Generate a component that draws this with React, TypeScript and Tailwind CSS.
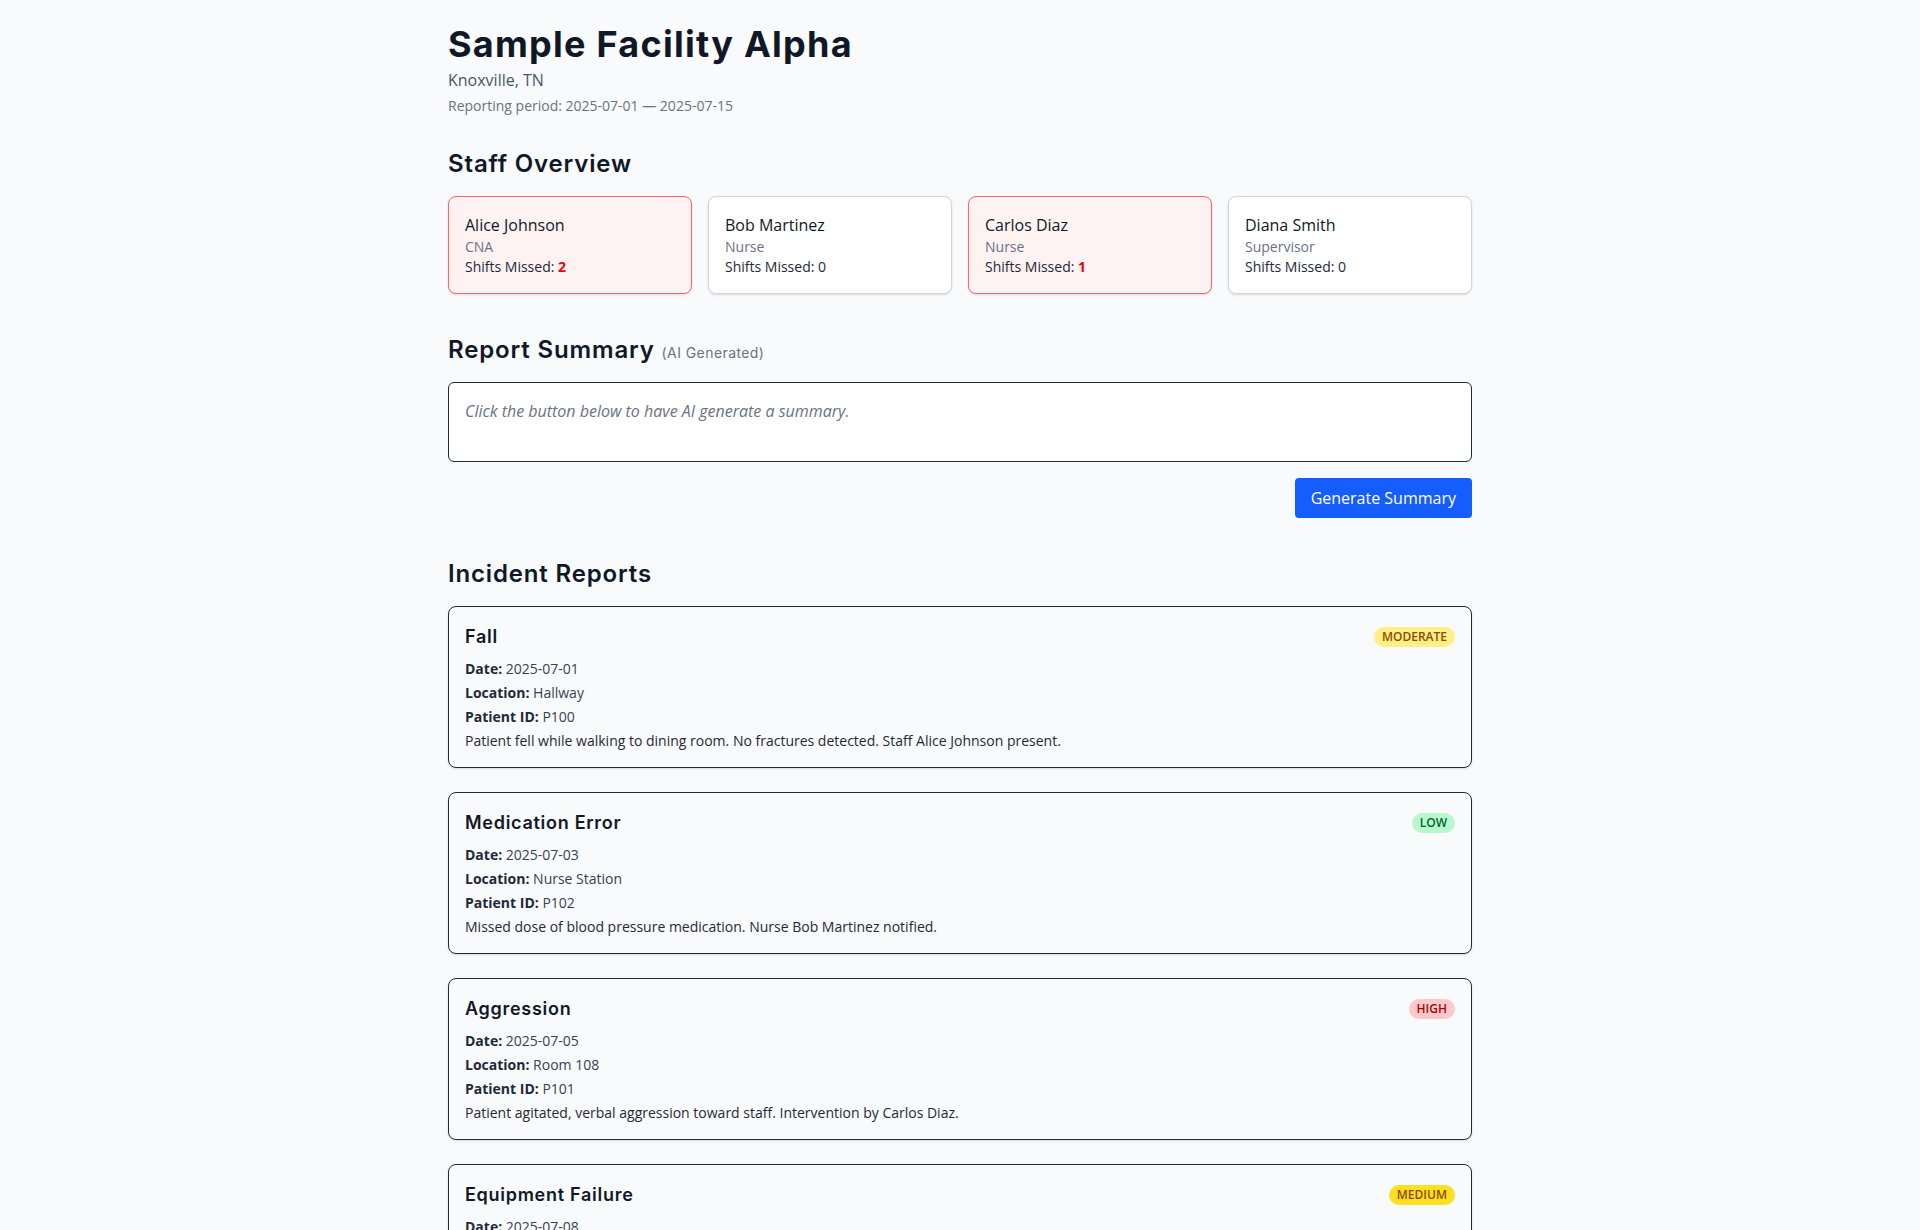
import React from "react";

type Staff = { name: string; role: string; missed: number };
type Incident = {
  type: string;
  severity: "moderate" | "low" | "high" | "medium";
  date: string;
  location: string;
  patientId: string;
  description: string;
};

const staff: Staff[] = [
  { name: "Alice Johnson", role: "CNA", missed: 2 },
  { name: "Bob Martinez", role: "Nurse", missed: 0 },
  { name: "Carlos Diaz", role: "Nurse", missed: 1 },
  { name: "Diana Smith", role: "Supervisor", missed: 0 },
];

const incidents: Incident[] = [
  {
    type: "Fall",
    severity: "moderate",
    date: "2025-07-01",
    location: "Hallway",
    patientId: "P100",
    description:
      "Patient fell while walking to dining room. No fractures detected. Staff Alice Johnson present.",
  },
  {
    type: "Medication Error",
    severity: "low",
    date: "2025-07-03",
    location: "Nurse Station",
    patientId: "P102",
    description: "Missed dose of blood pressure medication. Nurse Bob Martinez notified.",
  },
  {
    type: "Aggression",
    severity: "high",
    date: "2025-07-05",
    location: "Room 108",
    patientId: "P101",
    description:
      "Patient agitated, verbal aggression toward staff. Intervention by Carlos Diaz.",
  },
  {
    type: "Equipment Failure",
    severity: "medium",
    date: "2025-07-08",
    location: "Room 112",
    patientId: "P104",
    description: "Bed alarm failed to activate during night shift. Maintenance notified.",
  },
];

const badgeClass: Record<Incident["severity"], string> = {
  moderate: "bg-yellow-200 text-yellow-800",
  low: "bg-green-200 text-green-800",
  high: "bg-red-200 text-red-800",
  medium: "bg-yellow-300 text-yellow-800",
};

// headings use a wide geometric face; Inter with extra tracking is the nearest installed
const heading = "font-['Inter',sans-serif]";

const StaffCard = ({ person }: { person: Staff }) => {
  const flagged = person.missed > 0;
  return (
    <div
      className={
        flagged
          ? "rounded-lg border border-red-400 bg-red-50 p-4 shadow-sm"
          : "rounded-lg border border-gray-300 bg-white p-4 shadow-sm"
      }
    >
      <h3 className="text-base font-medium text-gray-900">{person.name}</h3>
      <p className="text-sm text-gray-500">{person.role}</p>
      <p className="text-sm text-gray-800">
        Shifts Missed:{" "}
        {flagged ? (
          <span className="font-bold text-red-600">{person.missed}</span>
        ) : (
          <span>{person.missed}</span>
        )}
      </p>
    </div>
  );
};

const IncidentCard = ({ incident }: { incident: Incident }) => {
  return (
    <div className="rounded-lg border border-gray-800 bg-gray-50 p-4 shadow-sm">
      <div className="mb-2 flex items-center justify-between">
        <h3 className={`${heading} text-lg font-semibold tracking-[0.04em] text-gray-900`}>
          {incident.type}
        </h3>
        <span
          className={`rounded-full px-2 py-0.5 text-xs font-semibold uppercase ${badgeClass[incident.severity]}`}
        >
          {incident.severity}
        </span>
      </div>
      <div className="space-y-1 text-sm text-gray-700">
        <p>
          <span className="font-bold text-gray-800">Date:</span> {incident.date}
        </p>
        <p>
          <span className="font-bold text-gray-800">Location:</span> {incident.location}
        </p>
        <p>
          <span className="font-bold text-gray-800">Patient ID:</span> {incident.patientId}
        </p>
        <p className="text-gray-800">{incident.description}</p>
      </div>
    </div>
  );
};

export default function App() {
  return (
    <div className="min-h-screen bg-gray-50 font-['Open_Sans',sans-serif] text-gray-900">
      <div className="mx-auto max-w-5xl py-6">
        <header>
          <h1 className={`${heading} text-4xl font-bold tracking-[0.035em] text-gray-900`}>
            Sample Facility Alpha
          </h1>
          <p className="mt-1 text-base text-gray-600">Knoxville, TN</p>
          <p className="mt-1 text-sm text-gray-500">Reporting period: 2025-07-01 — 2025-07-15</p>
        </header>

        <section className="mt-8">
          <h2 className={`${heading} mb-4 text-2xl font-semibold tracking-[0.035em]`}>
            Staff Overview
          </h2>
          <div className="grid grid-cols-4 gap-4">
            {staff.map((p) => (
              <StaffCard key={p.name} person={p} />
            ))}
          </div>
        </section>

        <section className="mt-10">
          <h2 className={`${heading} mb-4 text-2xl font-semibold tracking-[0.035em]`}>
            Report Summary{" "}
            <span className="text-sm font-normal tracking-[0.03em] text-gray-500">
              (AI Generated)
            </span>
          </h2>
          <div className="min-h-20 rounded-md border border-gray-800 bg-white p-4">
            <p className="text-base italic text-gray-500">
              Click the button below to have AI generate a summary.
            </p>
          </div>
          <div className="mt-4 flex justify-end">
            <button
              type="button"
              className="rounded bg-blue-600 px-4 py-2 text-base text-white hover:bg-blue-700"
            >
              Generate Summary
            </button>
          </div>
        </section>

        <section className="mt-10">
          <h2 className={`${heading} mb-4 text-2xl font-semibold tracking-[0.035em]`}>
            Incident Reports
          </h2>
          <div className="space-y-6">
            {incidents.map((i) => (
              <IncidentCard key={i.type} incident={i} />
            ))}
          </div>
        </section>
      </div>
    </div>
  );
}
